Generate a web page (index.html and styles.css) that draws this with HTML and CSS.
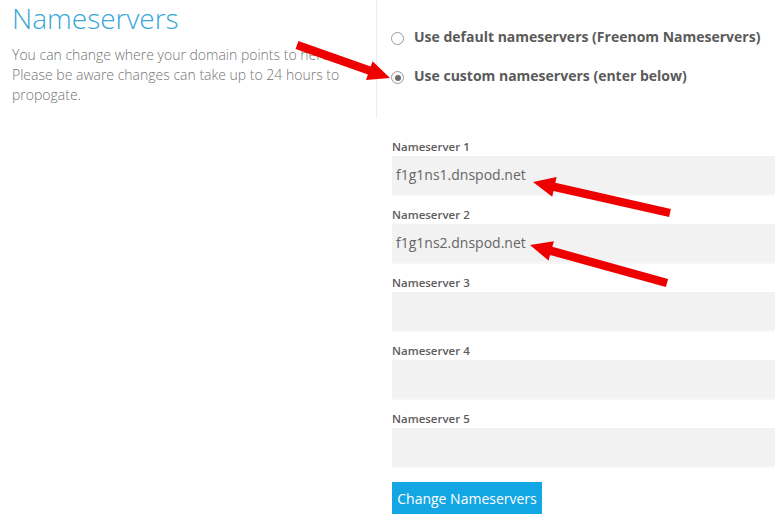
FILE: index.html
```html
<!DOCTYPE html>
<html>
<head>
<meta charset="utf-8">
<link rel="stylesheet" href="styles.css">
</head>
<body>
<div class="page">
  <div class="top">
    <div class="intro">
      <h1 class="title">Nameservers</h1>
      <p class="desc">You can change where your domain points to here. Please be aware changes can take up to 24 hours to propogate.</p>
    </div>
    <div class="choices">
      <label class="choice"><span class="radio"></span>Use default nameservers (Freenom Nameservers)</label>
      <label class="choice"><span class="radio checked"></span>Use custom nameservers (enter below)</label>
    </div>
  </div>
  <div class="fields">
    <div class="field"><div class="label">Nameserver 1</div><div class="input">f1g1ns1.dnspod.net</div></div>
    <div class="field"><div class="label">Nameserver 2</div><div class="input">f1g1ns2.dnspod.net</div></div>
    <div class="field"><div class="label">Nameserver 3</div><div class="input"></div></div>
    <div class="field"><div class="label">Nameserver 4</div><div class="input"></div></div>
    <div class="field"><div class="label">Nameserver 5</div><div class="input"></div></div>
    <button class="btn">Change Nameservers</button>
  </div>
  <svg class="arrows" width="775" height="526" viewBox="0 0 775 526">
    <g fill="#ee0000">
      <polygon points="390,78 372.6,61.2 370.7,66.6 298.4,41 295.6,49 367.9,74.6 366,80"/>
      <polygon points="533,182 556.6,177.1 555.3,182.8 670.9,208.9 669.1,217.1 553.5,191 552.2,196.7"/>
      <polygon points="530,245 553.9,241.2 552.3,246.8 668.1,278.9 665.9,287.1 550.1,254.9 548.5,260.6"/>
    </g>
  </svg>
</div>
</body>
</html>
```
FILE: styles.css
```css
html, body {
  margin: 0;
  padding: 0;
  background: #ffffff;
}
body {
  font-family: "Open Sans", "Liberation Sans", sans-serif;
  width: 775px;
  height: 526px;
  overflow: hidden;
}
.page {
  position: relative;
  width: 775px;
  height: 526px;
}
.top {
  display: flex;
  height: 118px;
}
.intro {
  width: 364px;
  padding-left: 12px;
  border-right: 1px solid #ededed;
}
.title {
  margin: 0;
  font-size: 28px;
  font-weight: 300;
  color: #3aa6d8;
  line-height: 36px;
}
.desc {
  margin: 9px 0 0;
  width: 352px;
  font-size: 14px;
  font-weight: 300;
  line-height: 20px;
  color: #757575;
}
.choices {
  display: flex;
  flex-direction: column;
  gap: 19px;
  padding: 27px 0 0 14px;
}
.choice {
  display: flex;
  align-items: center;
  gap: 10px;
  font-size: 14px;
  font-weight: 700;
  color: #5a5a5a;
  line-height: 20px;
}
.radio {
  width: 11px;
  height: 11px;
  border: 1px solid #9a9a9a;
  border-radius: 50%;
  background: #fff;
  margin-top: 3px;
  display: flex;
  align-items: center;
  justify-content: center;
}
.radio.checked {
  background: #fbfbfb;
}
.radio.checked::after {
  content: "";
  width: 6px;
  height: 6px;
  border-radius: 50%;
  background: #6a6a6a;
}
.fields {
  padding: 20px 0 0 392px;
}
.field {
  margin-bottom: 10px;
}
.label {
  font-size: 11.5px;
  font-weight: 600;
  color: #5c5c5c;
  line-height: 18px;
}
.input {
  height: 38px;
  background: #f2f2f2;
  border-bottom: 2px solid #f7f7f7;
  font-size: 14px;
  color: #666;
  line-height: 38px;
  padding-left: 4px;
}
.btn {
  display: block;
  margin-top: 14px;
  width: 150px;
  height: 32px;
  border: 0;
  background: #13a6e4;
  color: #fff;
  font-family: "Open Sans", "Liberation Sans", sans-serif;
  font-size: 14px;
  padding: 0;
}
.arrows {
  position: absolute;
  left: 0;
  top: 0;
  pointer-events: none;
}
```
